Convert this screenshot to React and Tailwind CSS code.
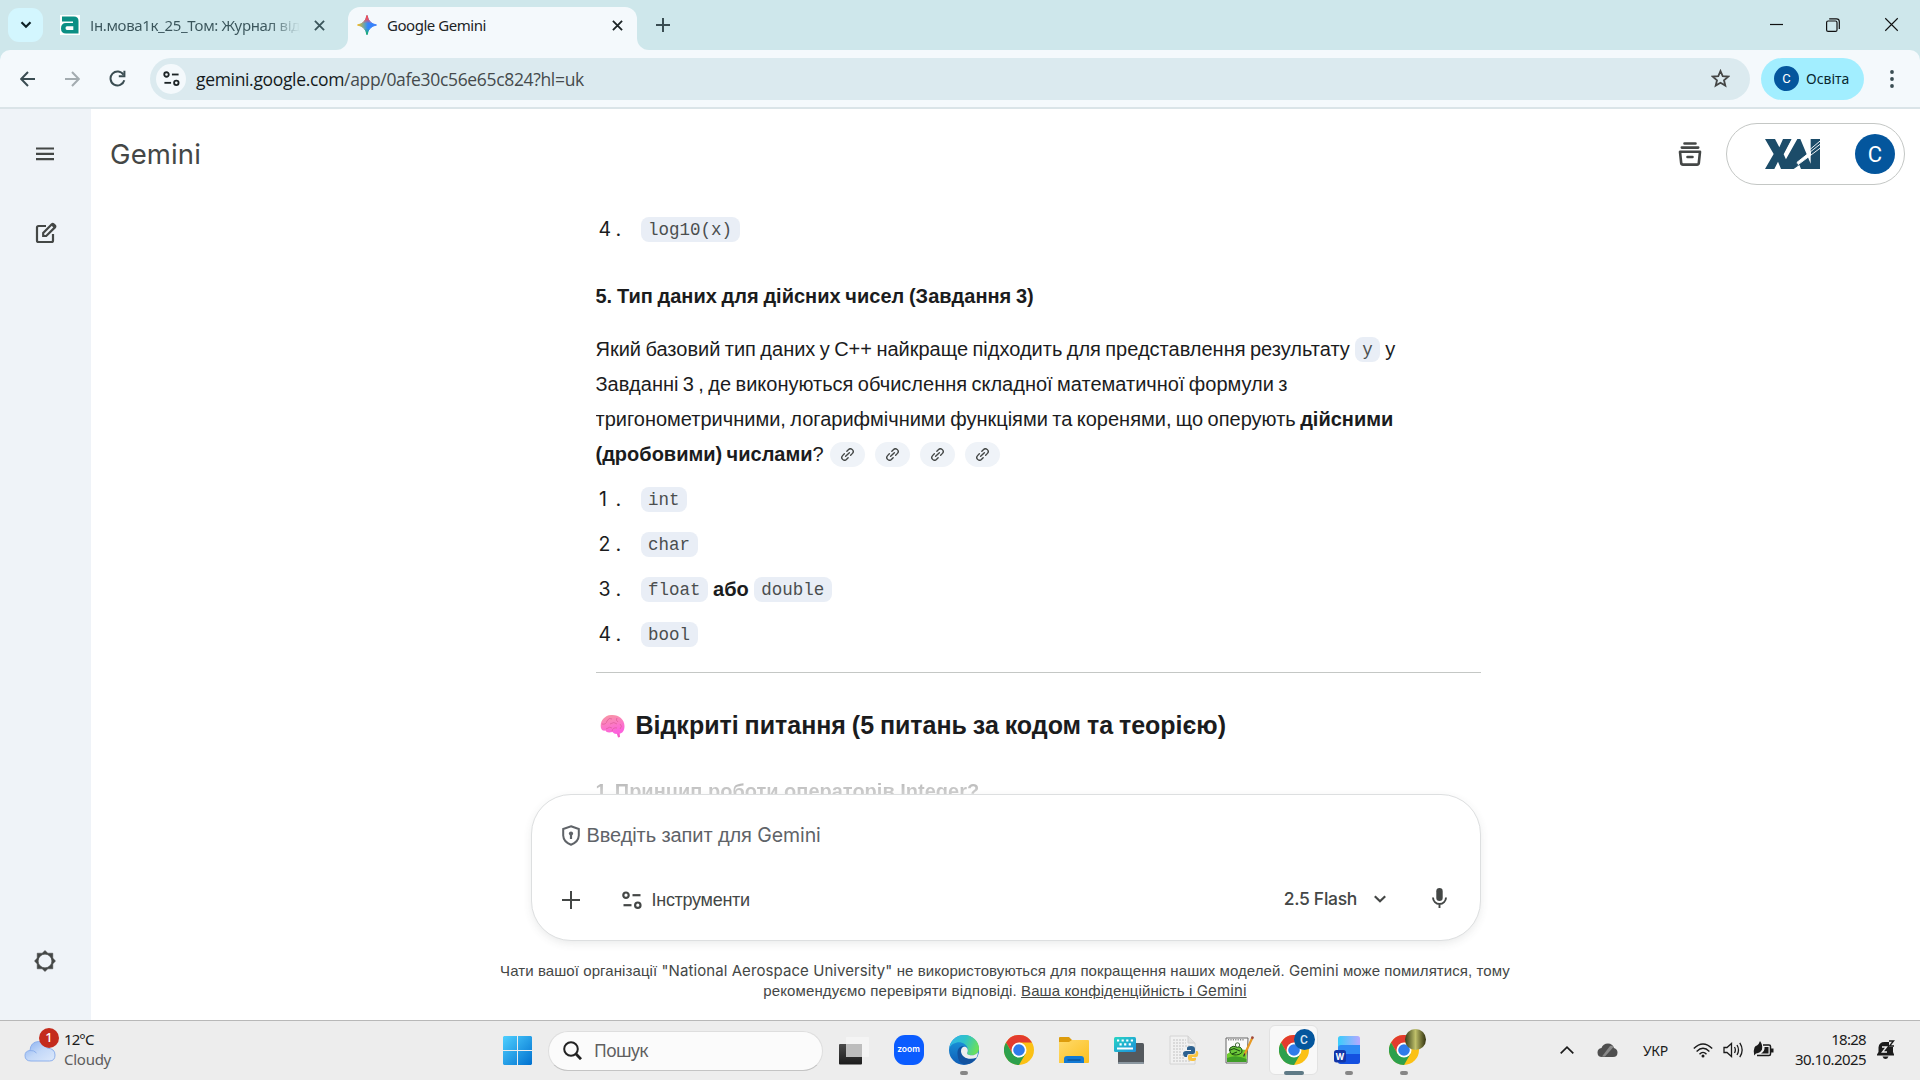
import React from "react";

const SEGOE = "font-['Noto_Sans',sans-serif]";

function Sliders({ className }) {
  return (
    <svg className={className} viewBox="0 0 20 18" fill="none" stroke="currentColor" strokeWidth="2.200">
      <circle cx="4" cy="4.2" r="2.7" />
      <path d="M10.5 4.2H18.5" />
      <circle cx="15.8" cy="14.2" r="2.7" />
      <path d="M1.5 14.2H9.5" />
    </svg>
  );
}

function Cross({ className, w = 2 }) {
  return (
    <svg className={className} viewBox="0 0 12 12" fill="none" stroke="currentColor" strokeWidth={w}>
      <path d="M1 1L11 11M11 1L1 11" />
    </svg>
  );
}

function TabStrip() {
  return (
    <div className={`flex h-[50px] shrink-0 items-end bg-[#cee7eb] text-[15px] ${SEGOE}`}>
      <div className="mb-2 ml-2 flex h-[34px] w-[35px] items-center justify-center rounded-[11px] bg-[#d3f6fe]">
        <svg className="h-[8px] w-[12px]" viewBox="0 0 12 8" fill="none" stroke="#0d2024" strokeWidth="2.2"><path d="M1.5 1.3L6 5.8L10.500 1.3" /></svg>
      </div>
      <div className="mb-[5px] ml-[17px] flex h-10 w-[270px] items-center text-[#3a555b]">
        <svg className="h-5 w-5 shrink-0" viewBox="0 0 20 20">
          <rect width="20" height="20" fill="#fff" />
          <path d="M2 1.500H14Q18.500 1.500 18.500 6V18.500H6Q1 18.500 1 13.500Q1 8 6 8H13V6.500H2Z" fill="#0b8f84" />
          <path d="M7 11.200H13.300V15H7Q5.500 15 5.500 13.100Q5.500 11.200 7 11.200Z" fill="#fff" />
        </svg>
        <span className="ml-[10px] w-[210px] overflow-hidden whitespace-nowrap bg-linear-to-r from-[#3a555b] from-85% to-transparent bg-clip-text tracking-[-0.35px] text-transparent">Ін.мова1к_25_Том: Журнал від</span>
        <Cross className="ml-[14px] h-[11px] w-[11px]" />
      </div>
      <div className="relative ml-[18px] flex h-[43px] w-[289px] items-center rounded-t-[12px] bg-[#f4f9fc] pb-[7px] text-[#1c2426]">
        <div className="absolute bottom-0 -left-3 h-3 w-3 overflow-hidden"><div className="h-3 w-3 rounded-br-[12px] shadow-[6px_6px_0_6px_#f4f9fc]" /></div>
        <div className="absolute bottom-0 -right-3 h-3 w-3 overflow-hidden"><div className="h-3 w-3 rounded-bl-[12px] shadow-[-6px_6px_0_6px_#f4f9fc]" /></div>
        <svg className="ml-[9px] h-[20px] w-[20px]" viewBox="0 0 20 20">
          <defs>
            <linearGradient id="gemA" x1="0" y1="0" x2="1" y2="0"><stop offset="0" stopColor="#f6b818" /><stop offset=".4" stopColor="#5aa0c0" /><stop offset=".55" stopColor="#3186ff" /><stop offset="1" stopColor="#3b7cf5" /></linearGradient>
            <linearGradient id="gemB" x1="0" y1="0" x2="0" y2="1"><stop offset="0" stopColor="#ff4641" /><stop offset=".2" stopColor="#f05060" stopOpacity=".9" /><stop offset=".42" stopColor="#f05060" stopOpacity="0" /><stop offset=".68" stopColor="#10b060" stopOpacity="0" /><stop offset="1" stopColor="#10b060" /></linearGradient>
          </defs>
          <path d="M10 .5Q11.500 8.500 19.500 10Q11.500 11.500 10 19.500Q8.500 11.500 .5 10Q8.500 8.500 10 .5Z" fill="url(#gemA)" stroke="url(#gemA)" />
          <path d="M10 .5Q11.500 8.500 19.500 10Q11.500 11.500 10 19.500Q8.500 11.500 .5 10Q8.500 8.500 10 .5Z" fill="url(#gemB)" stroke="url(#gemB)" />
        </svg>
        <span className="ml-[10px] w-[225px] tracking-[-0.46px]">Google Gemini</span>
        <Cross className="h-[11px] w-[11px]" />
      </div>
      <svg className="mb-[18px] ml-[19px] h-[14px] w-[14px]" viewBox="0 0 14 14" stroke="#3a4d52" strokeWidth="2"><path d="M7 0V14M0 7H14" /></svg>
      <div className="mb-[18px] ml-auto mr-[21px] flex items-center text-[#111]">
        <svg className="h-[14px] w-[14px]" viewBox="0 0 14 14" stroke="currentColor" strokeWidth="1.200"><path d="M0 6.500H13" /></svg>
        <svg className="ml-[42px] h-[14px] w-[14px]" viewBox="0 0 14 14" fill="none" stroke="currentColor" strokeWidth="1.200"><rect x=".6" y="3" width="10.400" height="10.400" rx="1.500" /><path d="M3.200 .8H10.500Q13.300 .8 13.300 3.600V11" /></svg>
        <Cross className="ml-[44px] h-[15px] w-[15px]" w={0.9} />
      </div>
    </div>
  );
}

function Toolbar() {
  return (
    <div className="shrink-0 bg-[#cee7eb]">
      <div className={`flex h-[59px] items-center rounded-t-[10px] border-b-2 border-[#dae4e8] bg-[#f4f9fc] text-[#3a4d52] ${SEGOE}`}>
        <svg className="ml-5 h-4 w-[15px]" viewBox="0 0 15 16" fill="none" stroke="currentColor" strokeWidth="2"><path d="M15 8H1.500M8 1L1.200 8L8 15" /></svg>
        <svg className="ml-[30px] h-4 w-[15px]" viewBox="0 0 15 16" fill="none" stroke="#a3acb0" strokeWidth="2"><path d="M0 8H13.500M7 1L13.800 8L7 15" /></svg>
        <svg className="ml-[29px] h-[17px] w-[17px]" viewBox="0 0 17 17" fill="none" stroke="currentColor" strokeWidth="2"><path d="M14.500 4.800A7 7 0 1 0 15.300 10.300" /><path d="M15.400 .8V6.300H9.800" /></svg>
        <div className="ml-[24px] flex h-[42px] w-[1600px] items-center rounded-full bg-[#dbeaef] pl-[6px]">
          <div className="flex h-[30px] w-[30px] items-center justify-center rounded-full bg-[#f4f9fc] text-[#1c2426]"><Sliders className="h-[15px] w-[17px]" /></div>
          <span className="ml-[10px] pt-[2px] text-[17.5px] tracking-[-0.33px] font-['Open_Sans',sans-serif] text-[#454a4c]"><span className="text-[#151a1c]">gemini.google.com</span>/app/0afe30c56e65c824?hl=uk</span>
          <svg className="ml-auto mr-5 h-[19px] w-[19px]" viewBox="0 0 19 19" fill="none" stroke="#454746" strokeWidth="1.800"><path d="M9.500 2L11.700 7.100L17.200 7.600L13 11.200L14.300 16.600L9.500 13.700L4.700 16.600L6 11.200L1.800 7.600L7.300 7.100Z" /></svg>
        </div>
        <div className="ml-[11px] flex h-[42px] w-[103px] items-center rounded-full bg-[#a2eeff] pl-[13px]">
          <div className="flex h-[25px] w-[25px] items-center justify-center rounded-full bg-[#04569d] font-[Roboto,sans-serif] text-[13px] text-white">C</div>
          <span className="ml-[7px] pb-px text-[14px] text-[#08282f]">Освіта</span>
        </div>
        <svg className="ml-[26px] h-[18px] w-[4px]" viewBox="0 0 4 18" fill="#3a4d52"><circle cx="2" cy="2" r="1.900" /><circle cx="2" cy="9" r="1.900" /><circle cx="2" cy="16" r="1.900" /></svg>
      </div>
    </div>
  );
}

function Sidebar() {
  return (
    <div className="flex w-[91px] shrink-0 flex-col items-center bg-[#eff3f8] pr-[2px] text-[#444746]">
      <svg className="mt-[38px] h-[14px] w-[18px]" viewBox="0 0 18 14" stroke="currentColor" strokeWidth="2.200"><path d="M0 1.500H18M0 6.800H18M0 12.100H18" /></svg>
      <svg className="mt-[61px] ml-[2px] h-[22px] w-[22px]" viewBox="0 0 22 22" fill="none" stroke="currentColor" strokeWidth="2.200"><path d="M11 4H3.500Q2 4 2 5.500V18.500Q2 20 3.500 20H16.500Q18 20 18 18.500V12" /><path d="M8.200 14V11L16.800 2.300Q17.700 1.500 18.600 2.300L19.900 3.600Q20.700 4.500 19.900 5.400L11.200 14Z" /><path d="M15.800 2.800L19.300 6.400L20.700 4.300L18 1.500Z" fill="currentColor" stroke="none" /></svg>
      <svg className="mt-auto mb-[48px] h-[22px] w-[22px]" viewBox="0 0 22 22" fill="none" stroke="currentColor"><path d="M11 .5L13.900 3.200H18.800V8.100L21.500 11L18.800 13.900V18.800H13.900L11 21.500L8.100 18.800H3.200V13.900L.5 11L3.200 8.100V3.200H8.100ZM11 4.200A6.800 6.800 0 1 0 11 17.800A6.800 6.800 0 1 0 11 4.200Z" fill="currentColor" fillRule="evenodd" strokeWidth=".5" /></svg>
    </div>
  );
}

function GeminiHeader() {
  return (
    <div className="flex h-[90px] shrink-0 items-center pl-[19px] text-[#444746]">
      <span className="pt-[2px] font-[Inter,sans-serif] text-[27.5px] tracking-[0.13px]">Gemini</span>
      <svg className="ml-auto mr-[24px] h-6 w-6" viewBox="0 0 24 24" fill="none" stroke="currentColor" strokeWidth="2.600"><path d="M6.500 1.500H17.500M3.800 5.600H20.200M9.500 15H14.500" strokeLinecap="round" /><path d="M2 9.800H22L20.800 21Q20.700 22.600 19 22.600H5Q3.400 22.600 3.200 21Z" strokeLinejoin="round" /></svg>
      <div className="mr-[15px] flex h-[62px] w-[179px] items-center rounded-full border border-[#c4c7c5] pl-[38px]">
        <svg className="h-[30px] w-[55px]" viewBox="0 0 165 90">
          <path d="M0 0H30L43 25L54 0H80L56 46L76 90H48L39 68L28 90H0L26 45Z" fill="#1c4c69" />
          <path d="M97 0H106L137 74V0H165V90H108L103 78L86 90H52L62 62Z" fill="#1c4c69" />
          <path d="M83 0L60 46" stroke="#fff" strokeWidth="3.500" />
          <path d="M94 72L138 36V48L100 76Z" fill="#fff" />
          <path d="M96 70L170 12M98 78L170 24M132 34L170 2" stroke="#fff" strokeWidth="2.800" fill="none" />
        </svg>
        <div className="ml-[35px] flex h-10 w-10 items-center justify-center rounded-full bg-[#04569d] pt-px font-[Roboto,sans-serif] text-[22px] text-white">C</div>
      </div>
    </div>
  );
}

function Code({ children }) {
  return <code className="inline-flex h-[25px] items-center rounded-[8px] bg-[#e9eef6] px-[7.5px] pt-px font-['Liberation_Mono',monospace] text-[17.5px] text-[#4b4e4f]">{children}</code>;
}

function Item({ n, children }) {
  return (
    <div className="flex h-[45px] items-center">
      <span className="w-3 pl-[3px] text-center font-[Inter,sans-serif] text-[19.5px]">{n}</span>
      <span className="ml-[7px] w-[26px] pl-px font-[Inter,sans-serif]">.</span>
      <span className="flex items-center gap-[5px]">{children}</span>
    </div>
  );
}

function LinkChip() {
  return (
    <span className="mr-[10px] flex h-[25px] w-[35px] items-center justify-center rounded-full bg-[#eff3f8]">
      <svg className="h-[13px] w-[13px]" viewBox="0 0 14 14" fill="none" stroke="#444746" strokeWidth="1.500" strokeLinecap="round"><path d="M6.300 3.600L8.200 1.700A2.900 2.900 0 0 1 12.300 5.800L10.400 7.700M7.700 10.400L5.800 12.300A2.900 2.900 0 0 1 1.700 8.200L3.600 6.300M5 9L9 5" /></svg>
    </span>
  );
}

function Brain() {
  return (
    <svg className="h-[24px] w-[25px]" viewBox="0 0 25 24">
      <defs><linearGradient id="brain" x1="0" y1="0" x2=".3" y2="1"><stop offset="0" stopColor="#f79aa0" /><stop offset=".5" stopColor="#fb7ec0" /><stop offset="1" stopColor="#fd62dc" /></linearGradient></defs>
      <path d="M16 17L18 23.500L20 23L19.500 17Z" fill="#f45cc8" />
      <path d="M1 14C-.5 8 4 1.500 11 1C18 .2 24.500 5 24.500 12C24.500 17 22 20 18.500 19.500C16 20.500 14 20 12.500 18C9 19 6 18.500 5.500 16.500C3 17 1.500 16 1 14Z" fill="url(#brain)" />
      <path d="M2 10Q6 11 7 7M7 7Q9 3 12 5M10 10Q14 7 17 10M17 4Q15 6 18 8M12 17Q13 13 17 14M20 10Q23 12 20 15M6 15Q10 12 12 14" stroke="#e0609c" strokeWidth=".8" fill="none" />
    </svg>
  );
}

function Conversation() {
  return (
    <div className="ml-[504.5px] flex h-[595px] w-[885px] shrink-0 flex-col overflow-hidden whitespace-nowrap font-['Liberation_Sans',sans-serif] text-[20px] leading-[35px] text-[#1b1c1d]">
      <div className="mt-[8px]"><Item n="4"><Code>log10(x)</Code></Item></div>
      <p className="mt-[27px] font-bold [word-spacing:-0.8px]">5. Тип даних для дійсних чисел (Завдання 3)</p>
      <div className="mt-[18px] [word-spacing:-1.15px]">
        <div className="flex items-center">Який базовий тип даних у C++ найкраще підходить для представлення результату<span className="mx-[5px] flex"><Code>y</Code></span>у</div>
        <div>Завданні 3 , де виконуються обчислення складної математичної формули з</div>
        <div>тригонометричними, логарифмічними функціями та коренями, що оперують <b>дійсними</b></div>
        <div className="flex items-center"><b>(дробовими) числами</b>?<span className="ml-[6px] flex"><LinkChip /><LinkChip /><LinkChip /><LinkChip /></span></div>
      </div>
      <div className="mt-[5px]">
        <Item n="1"><Code>int</Code></Item>
        <Item n="2"><Code>char</Code></Item>
        <Item n="3"><Code>float</Code><b>або</b><Code>double</Code></Item>
        <Item n="4"><Code>bool</Code></Item>
      </div>
      <div className="mt-[15px] h-px shrink-0 bg-[#c4c7c5]" />
      <h2 className="mt-[35px] flex items-center text-[25px] font-bold [word-spacing:-1.1px]"><span className="mr-[11px] ml-[4px]"><Brain /></span>Відкриті питання (5 питань за кодом та теорією)</h2>
      <div className="mt-[31px]"><span className="bg-linear-to-b from-[#b4b4b4] to-[#e2e2e2] bg-clip-text font-bold text-transparent"><span className="tracking-[-1px]">1.</span> <span className="-ml-px">Принцип роботи операторів Integer?</span></span></div>
    </div>
  );
}

function Composer() {
  return (
    <div className="relative ml-[440px] flex h-[147px] w-[950px] shrink-0 flex-col rounded-[40px] border border-[#dddfe0] bg-white font-['Liberation_Sans',sans-serif] text-[#444746] shadow-[0_3px_10px_-1px_rgba(60,64,67,0.12)]">
      <div className="mt-[28px] ml-[30px] flex h-[25px] items-center text-[20px] text-[#5f6368]">
        <svg className="h-[21px] w-[18px]" viewBox="0 0 18 21" fill="none" stroke="currentColor" strokeWidth="2"><path d="M9 1.200L16.800 4V10.500Q16.500 17 9 19.700Q1.500 17 1.200 10.500V4Z" /><circle cx="9" cy="8.500" r="2.100" fill="currentColor" stroke="none" /><path d="M9 9V14" strokeWidth="2.200" /></svg>
        <span className="ml-[6.5px] whitespace-nowrap tracking-[-0.09px]">Введіть запит для <span className="font-[Inter,sans-serif] text-[19.500px]">Gemini</span></span>
      </div>
      <div className="mt-[39px] flex h-[25px] items-center pl-[30px]">
        <svg className="h-[18px] w-[18px]" viewBox="0 0 18 18" stroke="currentColor" strokeWidth="2"><path d="M9 0V18M0 9H18" /></svg>
        <Sliders className="ml-[42px] h-[18px] w-[20px]" />
        <span className="ml-[9.5px] pt-px text-[18px] tracking-[-0.28px]">Інструменти</span>
        <span className="ml-auto font-[Inter,sans-serif] text-[17.500px] font-medium tracking-[-0.3px]">2.5 Flash</span>
        <svg className="mb-[2px] ml-[17px] h-2 w-3" viewBox="0 0 12 8" fill="none" stroke="currentColor" strokeWidth="2.200"><path d="M.8 1.200L6 6.200L11.200 1.200" /></svg>
        <svg className="mr-[33px] mb-[3px] ml-[46px] h-5 w-[15px]" viewBox="0 0 15 20" fill="none" stroke="currentColor" strokeWidth="1.900"><rect x="4.300" y="0" width="6.400" height="13" rx="3.200" fill="currentColor" stroke="none" /><path d="M1 9.500A6.500 6.500 0 0 0 14 9.500M7.500 16V20" /></svg>
      </div>
    </div>
  );
}

function Disclaimer() {
  return (
    <div className="ml-[409px] mt-[20px] w-[1010px] text-center font-['Liberation_Sans',sans-serif] text-[15px] leading-5 whitespace-nowrap text-[#444746]">
      <div className="tracking-[0.08px]">Чати вашої організації <span className="font-[Inter,sans-serif]">"National Aerospace University"</span> не використовуються для покращення наших моделей. <span className="font-[Inter,sans-serif]">Gemini</span> може помилятися, тому</div>
      <div className="tracking-[0.11px]">рекомендуємо перевіряти відповіді. <span className="underline">Ваша конфіденційність і <span className="font-[Inter,sans-serif]">Gemini</span></span></div>
    </div>
  );
}

function Chrome() {
  return (
    <svg className="h-[30px] w-[30px]" viewBox="0 0 48 48">
      <circle cx="24" cy="24" r="24" fill="#fbc116" />
      <path d="M24 12H44.800A24 24 0 0 0 3.200 12L13.600 30Z" fill="#e33b2e" />
      <path d="M3.200 12A24 24 0 0 0 24 48L34.400 30L24 24L13.600 30Z" fill="#2da04c" />
      <circle cx="24" cy="24" r="12" fill="#fff" />
      <circle cx="24" cy="24" r="9.300" fill="#2f7bea" />
    </svg>
  );
}

function Slot({ children, mark, active }) {
  return (
    <div className="relative flex h-[59px] w-[55px] shrink-0 items-center justify-center">
      {active && <div className="absolute top-[4px] left-[3px] h-[50px] w-[49px] rounded-[6px] border border-[#e2e2e2] bg-[#f8f8f8]" />}
      <div className="relative mb-px flex">{children}</div>
      {mark && <div className={`absolute bottom-[5px] h-1 rounded-full ${active ? "w-5 bg-[#5f7a86]" : "w-2 bg-[#878787]"}`} />}
    </div>
  );
}

function Edge() {
  return (
    <svg className="h-[30px] w-[30px]" viewBox="0 0 30 30">
      <defs>
        <linearGradient id="e1" x1="0" y1=".2" x2="1" y2=".5"><stop offset="0" stopColor="#32b4ea" /><stop offset=".5" stopColor="#2fc3c8" /><stop offset="1" stopColor="#6be05a" /></linearGradient>
        <linearGradient id="e2" x1="0" y1="0" x2="0" y2="1"><stop offset="0" stopColor="#1c9de0" /><stop offset="1" stopColor="#0f5cb5" /></linearGradient>
      </defs>
      <circle cx="15" cy="15" r="15" fill="url(#e2)" />
      <path d="M.3 13C1.500 5.500 7.500 0 15 0C23.500 0 30 6.500 30 13.200C30 18 26.300 20.300 22.500 20.300C19.300 20.300 17.500 19 18.300 17.600C19.500 15.500 19 11.500 15.500 9C10.500 5.500 3 8 .3 13Z" fill="url(#e1)" />
      <path d="M8.500 19C8 14 11 11 15 11C13 12 11.700 14 12 16.500C12.600 22.500 19.500 25.500 27.500 22.800C24 29 16 31 11.500 27.500C9.500 25.800 8.700 22 8.500 19Z" fill="#12529f" />
      <path d="M12 16.500C11.800 13 14 11.500 16 11.800C18.700 12.500 19.500 15.500 18.300 17.600C17.500 19 19.300 20.300 22.500 20.300C25 20.300 27.500 19.300 29 17.200Q28.800 20.500 27.500 22.800C19.500 25.500 12.600 22.500 12 16.500Z" fill="#ededed" />
    </svg>
  );
}

function NotepadPlus() {
  return (
    <svg className="h-[30px] w-[30px]" viewBox="0 0 30 30">
      <path d="M2 3H24L23 28H2Z" fill="#fafafa" stroke="#666" />
      <path d="M3 19Q12 13 22.800 15L22.500 27H3Z" fill="#6fce2c" />
      <path d="M3 23Q12 19 22.500 24V27H3Z" fill="#3f9e28" />
      <path d="M6 13Q9 10 12.500 12Q17 11 18 15Q19 18 15 19.500Q9 21 6.500 18Q5 15 6 13Z" fill="#6cc93b" stroke="#1c4a12" strokeWidth="1" />
      <circle cx="13.500" cy="10" r="2.200" fill="#f4f8f0" stroke="#1c4a12" strokeWidth=".8" />
      <path d="M5 15.500L10 13.500L16 16M8 19L13 17" stroke="#1c4a12" strokeWidth="1.100" fill="none" />
      <path d="M28.500 2.500L20.500 19.500" stroke="#e79a24" strokeWidth="2.200" />
      <path d="M28.900 1.500L27.900 3.700" stroke="#a0483d" strokeWidth="2.400" />
      <path d="M20.800 18.500L19.700 21.500" stroke="#333" strokeWidth="1.200" />
      <path d="M4 4.800H20" stroke="#888" strokeWidth="1.500" strokeDasharray="1.200 1.200" />
    </svg>
  );
}

function Taskbar() {
  return (
    <div className={`flex h-[60px] shrink-0 items-center border-t border-[#b8b8b8] bg-[#ededed] text-[15px] text-[#1b1b1b] ${SEGOE}`}>
      <div className="relative ml-[24px] h-[34px] w-[36px]">
        <svg className="absolute top-[6px] left-0 h-[22px] w-[32px]" viewBox="0 0 32 22">
          <defs><linearGradient id="cl" x1="0" y1="0" x2="1" y2="1"><stop offset="0" stopColor="#86aef0" /><stop offset=".5" stopColor="#c3d8f8" /><stop offset="1" stopColor="#dde9fb" /></linearGradient></defs>
          <path d="M7 21Q1 21 1 15.500Q1 11 6 10.500Q6.500 2 14.500 1.500Q21 1.500 23 8Q31 8.500 31 15Q31 21 25.500 21Z" fill="url(#cl)" stroke="#8db0ec" />
          <path d="M6 10.500Q10 10 12.500 13" stroke="#8db0ec" fill="none" />
        </svg>
        <div className="absolute -top-[6px] left-[15px] flex h-5 w-5 items-center justify-center rounded-full bg-[#c42b1c] text-[13px] font-medium text-white">1</div>
      </div>
      <div className="ml-[4px] w-[430px] pb-[4px] leading-5"><div className="tracking-[-0.9px]">12°C</div><div className="tracking-[-0.26px] text-[#5c5c5c]">Cloudy</div></div>
      <svg className="ml-[9px] h-[29px] w-[29px]" viewBox="0 0 29 29"><defs><linearGradient id="w" x1="0" y1="0" x2="1" y2="1"><stop offset="0" stopColor="#4fd0ff" /><stop offset="1" stopColor="#0070cf" /></linearGradient></defs><path d="M1 0H14V14H0V1ZM15 0H28L29 1V14H15ZM0 15H14V29H1L0 28ZM15 15H29V28L28 29H15Z" fill="url(#w)" /></svg>
      <div className="ml-[16px] flex h-10 w-[275px] shrink-0 items-center rounded-full border border-[#dedede] border-b-[#c4c4c4] bg-[#fbfbfb] pl-[14px]">
        <svg className="h-[19px] w-[19px]" viewBox="0 0 19 19" fill="none" stroke="#222" strokeWidth="2"><circle cx="8" cy="8" r="6.800" /><path d="M12.800 12.800L18 18.200" strokeWidth="2.800" /></svg>
        <span className="ml-[12px] text-[17.500px] tracking-[-0.6px] text-[#5f5f5f]">Пошук</span>
      </div>
      <div className="ml-[3px] flex">
        <Slot>
          <svg className="h-[29px] w-[30px]" viewBox="0 0 30 29"><defs><linearGradient id="tv" x1="0" y1="0" x2="0" y2="1"><stop offset="0" stopColor="#4a4a4a" /><stop offset="1" stopColor="#1c1c1c" /></linearGradient></defs><rect y="8" width="23" height="20.500" rx="1" fill="url(#tv)" /><rect x="7" y="1" width="23" height="20" rx="1" fill="#f4f4f4" /><rect x="7" y="8" width="16" height="13" fill="#bdbdbd" /></svg>
        </Slot>
        <Slot><div className="flex h-[30px] w-[30px] items-center justify-center rounded-[11px] bg-[#0b5cff] pb-px font-[Inter,sans-serif] text-[8.500px] font-semibold text-white">zoom</div></Slot>
        <Slot mark><Edge /></Slot>
        <Slot><Chrome /></Slot>
        <Slot>
          <svg className="h-[28px] w-[30px]" viewBox="0 0 30 28"><defs><linearGradient id="fo" x1="0" y1="0" x2="1" y2="1"><stop offset="0" stopColor="#ffda6b" /><stop offset="1" stopColor="#fbbf1e" /></linearGradient></defs><path d="M0 2Q0 1 1 1H10L13 4H29V10H0Z" fill="#dd9c0c" /><path d="M0 6H10L13 4H29Q30 4 30 5V26Q30 27 29 27H0Z" fill="url(#fo)" /><path d="M5 27V23Q5 20 8 20H22Q25 20 25 23V27Z" fill="#127ad4" /><path d="M8.500 24H21.500" stroke="#0c4f91" strokeWidth="1.300" /></svg>
        </Slot>
        <Slot>
          <svg className="h-[28px] w-[30px]" viewBox="0 0 30 28"><defs><linearGradient id="kb" x1="0" y1="0" x2="1" y2="1"><stop offset="0" stopColor="#27d5c4" /><stop offset="1" stopColor="#1d8edc" /></linearGradient></defs><rect x="4" y="7" width="26" height="21" rx="1.500" fill="#54595e" /><rect x="4" y="26" width="26" height="2" rx="1" fill="#8b97a0" /><rect y="1" width="22" height="15" rx="1.500" fill="url(#kb)" /><path d="M3 4.500H19M5.500 8.300H17" stroke="#fff" strokeWidth="2.200" strokeDasharray="2.200 2.400" /><path d="M3 12.500H19" stroke="#fff" strokeWidth="2" /></svg>
        </Slot>
        <Slot>
          <svg className="h-[30px] w-[30px]" viewBox="0 0 30 30"><path d="M1 1H19L26 8V29H1Z" fill="#f1f1f1" stroke="#d4d4d4" /><path d="M19 1V8H26" fill="#e2e2e2" stroke="#d0d0d0" /><path d="M4 5H17M4 8H17M4 11H22M4 14H14M4 17H13M4 20H14M4 23H15M4 26H22" stroke="#c3c3c3" strokeDasharray="2 1" /><path d="M22 11Q26 11 26 14V17Q26 19 24 19H20Q18 19 18 22H16Q14 21 14 18.500Q14 16 17 16H22V15H18V13Q18 11 22 11Z" fill="#2d618f" /><path d="M23 26Q19 26 19 23.500V21.500Q19 19.500 21 19.500H25Q27 19.500 27 16H28.500Q30 18 29 20.500Q28.500 22 27 22H23V23H27V24.500Q26.500 26 23 26Z" fill="#f9c440" /></svg>
        </Slot>
        <Slot><NotepadPlus /></Slot>
        <Slot mark active>
          <Chrome />
          <div className="absolute -top-[6px] left-[15px] flex h-[21px] w-[21px] items-center justify-center rounded-full bg-[#04569d] font-[Roboto,sans-serif] text-[12px] font-medium text-[#dbe6f2]">C</div>
        </Slot>
        <Slot mark>
          <svg className="mr-[3px] h-[28px] w-[26px]" viewBox="0 0 26 28"><defs><linearGradient id="wd" x1="0" y1="0" x2="1" y2="0"><stop offset="0" stopColor="#38cdfb" /><stop offset="1" stopColor="#b7a8ff" /></linearGradient></defs><rect x="4" y="0" width="22" height="13" rx="2.500" fill="url(#wd)" /><path d="M4 12Q4 9 7 9H26V19H4Z" fill="#2f8af5" /><path d="M4 18H26V25.500Q26 28 23.500 28H6.500Q4 28 4 25.500Z" fill="#1450e0" /><rect y="14" width="12" height="12.500" rx="2.500" fill="#1236a8" /><text x="6" y="23.700" textAnchor="middle" fontFamily="Inter, sans-serif" fontWeight="700" fontSize="8.500" fill="#fff">W</text></svg>
        </Slot>
        <Slot mark>
          <Chrome />
          <div className="absolute -top-[6px] left-[16px] h-[21px] w-[21px] rounded-full bg-linear-to-r from-[#39401c] via-[#bfc06a] to-[#33330f]" />
        </Slot>
      </div>
      <div className="mr-[25px] ml-auto flex items-center">
        <svg className="mb-px h-2 w-[14px]" viewBox="0 0 14 8" fill="none" stroke="currentColor" strokeWidth="1.700"><path d="M.7 7.300L7 1.200L13.300 7.300" /></svg>
        <svg className="mb-px ml-[23px] h-[14px] w-[21px]" viewBox="0 0 21 14"><path d="M5 14Q.5 14 .5 9.500Q.5 5.500 4.500 5Q6 .5 11 .5Q15.500 .5 17 5Q20.500 6 20.500 9.500Q20.500 14 16 14Z" fill="#4f4f4f" /><path d="M5 13.500L13 3Q15 2 16.500 4L8 13.500Z" fill="#8a8a8a" /></svg>
        <span className="ml-[25px] w-[25px] pb-px text-[14px] tracking-[-0.3px]">УКР</span>
        <svg className="mb-px ml-[25px] h-[15px] w-[20px]" viewBox="0 0 20 15" fill="none" stroke="currentColor" strokeWidth="1.400"><path d="M.8 5.600Q10-3.600 19.200 5.600M3.600 8.400Q10 2 16.400 8.400M6.500 11.200Q10 7.500 13.500 11.200" /><circle cx="10" cy="13" r="1.500" fill="currentColor" stroke="none" /></svg>
        <svg className="mb-px ml-[10px] h-[18px] w-[21px]" viewBox="0 0 21 18" fill="none" stroke="currentColor" strokeWidth="1.300"><path d="M1 6.500H4L8.500 2.500V15.500L4 11.500H1Z" /><path d="M11.500 6Q13.200 9 11.500 12M14 4Q17 9 14 14M16.800 1.800Q21.500 9 16.800 16.200" /></svg>
        <svg className="mb-[3px] ml-[9px] h-[17px] w-[21px]" viewBox="0 0 21 17" fill="none" stroke="currentColor" strokeWidth="1.500"><path d="M10 4H16Q17.500 4 17.500 5.500V13Q17.500 14.500 16 14.500H4" /><path d="M19 7.500V11.500" strokeWidth="3" /><path d="M15.500 6V12.500H8Q12 10 11.500 6Z" fill="currentColor" stroke="none" /><path d="M7 0Q10 4 9 8.500Q7.500 12 3 12.500L1.200 14.500Q0 10 1.500 6.500Q2.500 4.500 4 4.500Q6 3 7 0Z" fill="currentColor" stroke="none" /></svg>
        <div className="ml-[20px] w-[72px] pb-[4px] text-right leading-5"><div className="tracking-[-0.7px]">18:28</div><div className="tracking-[-0.57px]">30.10.2025</div></div>
        <svg className="mb-px ml-[11px] h-[20px] w-[18px]" viewBox="0 0 18 20"><path d="M0 14.500L1.500 12V7.500Q2 2 7.500 2H12V7H16V12L17 14.500V15.500H0ZM5.500 16.500H11.500Q10.500 19 8.500 19Q6.500 19 5.500 16.500Z" fill="currentColor" /><path d="M5 7H9.500L5.500 12H10" stroke="#ededed" strokeWidth="1.400" fill="none" /><path d="M12 1H16.500L12.500 6H17" stroke="currentColor" strokeWidth="1.400" fill="none" /></svg>
      </div>
    </div>
  );
}

export default function App() {
  return (
    <div className="flex h-[1080px] w-[1920px] flex-col overflow-hidden bg-white">
      <TabStrip />
      <Toolbar />
      <div className="flex min-h-0 flex-1">
        <Sidebar />
        <main className="flex w-[1829px] flex-col">
          <GeminiHeader />
          <Conversation />
          <Composer />
          <Disclaimer />
        </main>
      </div>
      <Taskbar />
    </div>
  );
}
